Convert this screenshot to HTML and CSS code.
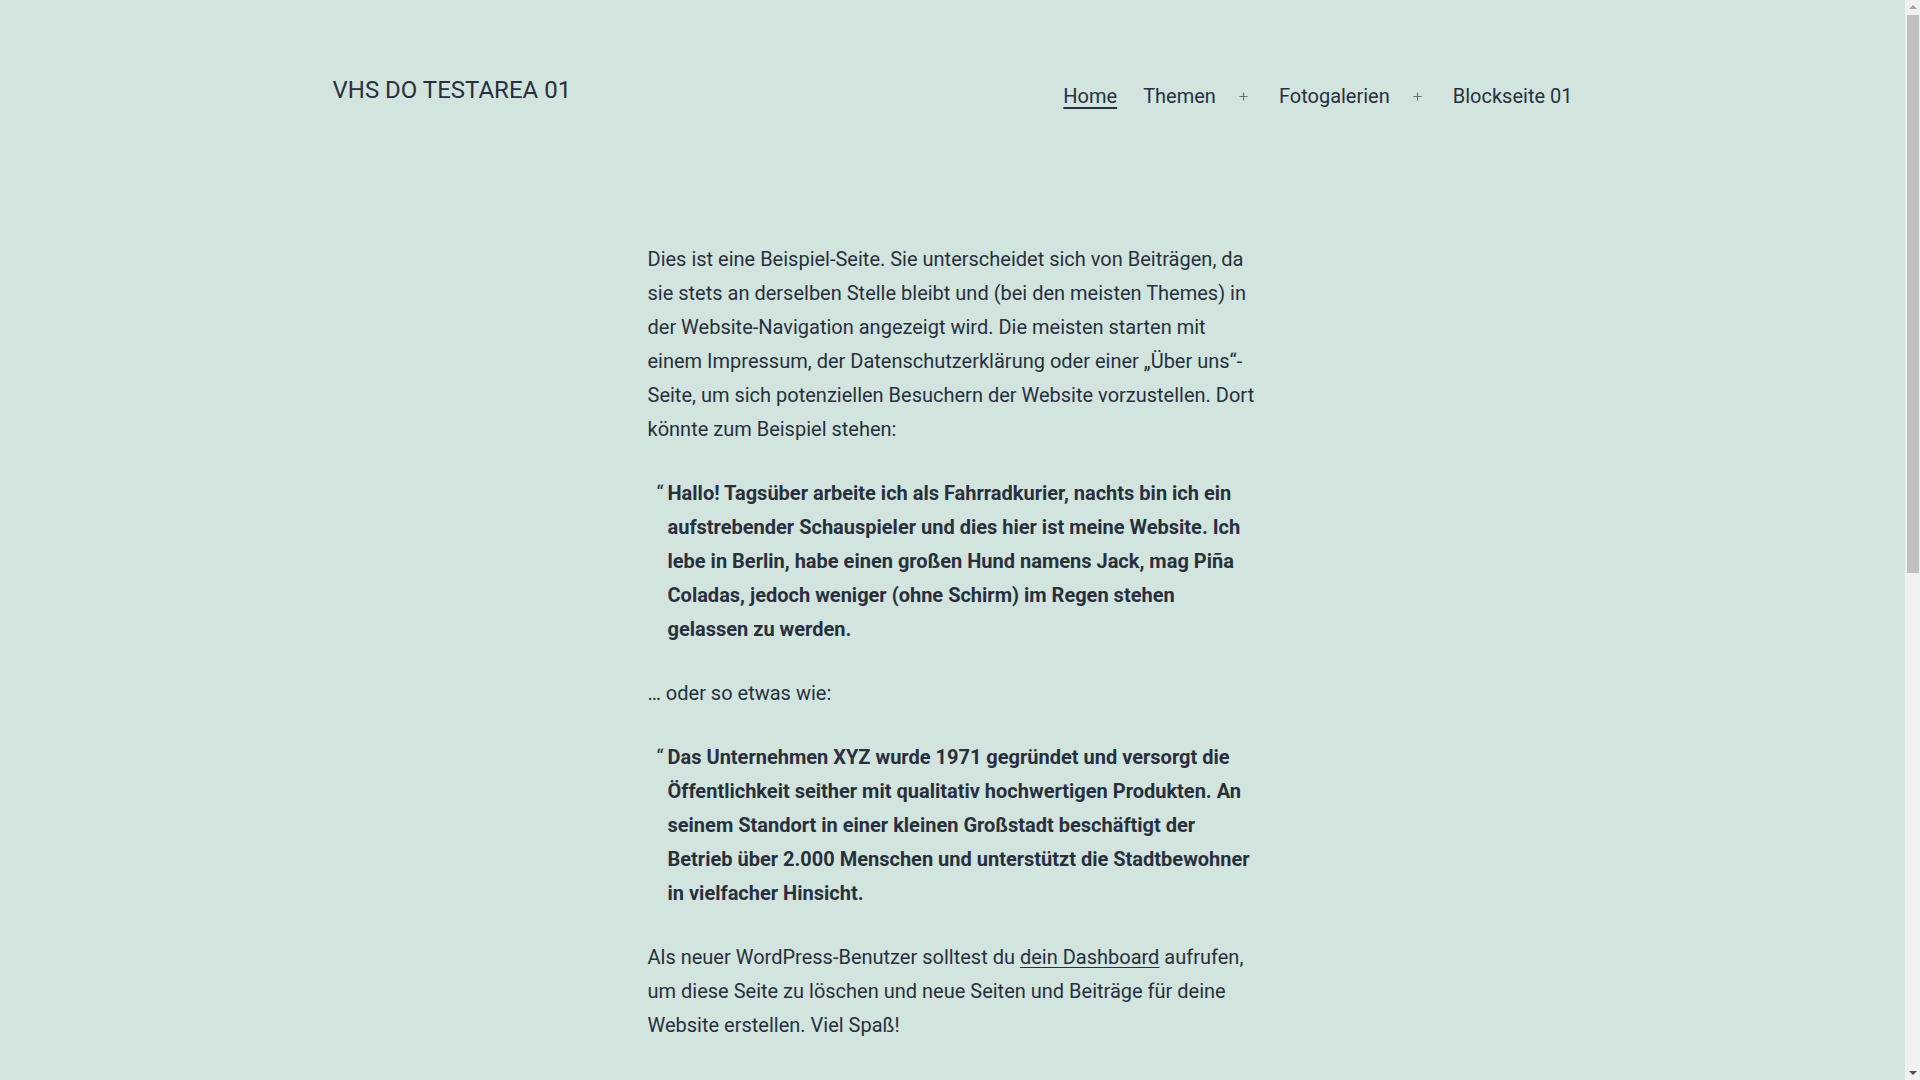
FILE: index.html
```html
<!DOCTYPE html>
<html lang="de">
<head>
<meta charset="utf-8">
<title>VHS DO TESTAREA 01</title>
<link rel="stylesheet" href="styles.css">
</head>
<body>
<header class="site-header">
  <p class="site-title">VHS DO TESTAREA 01</p>
  <nav class="primary-nav">
    <ul class="menu">
      <li class="menu-item current"><a href="#">Home</a></li>
      <li class="menu-item has-sub"><a href="#">Themen</a><button class="sub-toggle" aria-label="Untermenü öffnen"><svg viewBox="0 0 10 10" width="10" height="10"><path d="M5 0.5v9M0.5 5h9" stroke="currentColor" stroke-width="1.2" fill="none"/></svg></button></li>
      <li class="menu-item has-sub"><a href="#">Fotogalerien</a><button class="sub-toggle" aria-label="Untermenü öffnen"><svg viewBox="0 0 10 10" width="10" height="10"><path d="M5 0.5v9M0.5 5h9" stroke="currentColor" stroke-width="1.2" fill="none"/></svg></button></li>
      <li class="menu-item"><a href="#">Blockseite 01</a></li>
    </ul>
  </nav>
</header>
<main class="content">
  <p>Dies ist eine Beispiel-Seite. Sie unterscheidet sich von Beiträgen, da sie stets an derselben Stelle bleibt und (bei den meisten Themes) in der Website-Navigation angezeigt wird. Die meisten starten mit einem Impressum, der Datenschutzerklärung oder einer „Über uns“-Seite, um sich potenziellen Besuchern der Website vorzustellen. Dort könnte zum Beispiel stehen:</p>
  <blockquote class="quote"><p>Hallo! Tagsüber arbeite ich als Fahrradkurier, nachts bin ich ein aufstrebender Schauspieler und dies hier ist meine Website. Ich lebe in Berlin, habe einen großen Hund namens Jack, mag Piña Coladas, jedoch weniger (ohne Schirm) im Regen stehen gelassen zu werden.</p></blockquote>
  <p>… oder so etwas wie:</p>
  <blockquote class="quote"><p>Das Unternehmen XYZ wurde 1971 gegründet und versorgt die Öffentlichkeit seither mit qualitativ hochwertigen Produkten. An seinem Standort in einer kleinen Großstadt beschäftigt der Betrieb über 2.000 Menschen und unterstützt die Stadtbewohner in vielfacher Hinsicht.</p></blockquote>
  <p>Als neuer WordPress-Benutzer solltest du <a href="#">dein Dashboard</a> aufrufen, um diese Seite zu löschen und neue Seiten und Beiträge für deine Website erstellen. Viel Spaß!</p>
</main>
<div class="scrollbar" aria-hidden="true">
  <span class="sb-arrow sb-up"></span>
  <span class="sb-thumb"></span>
  <span class="sb-arrow sb-down"></span>
</div>
</body>
</html>
```
FILE: styles.css
```css
html, body {
  margin: 0;
  padding: 0;
}
body {
  background: #d1e4dd;
  color: #28303d;
  font-family: Roboto, "Liberation Sans", sans-serif;
  font-size: 20px;
  line-height: 1.7;
  padding-right: 15px;
}
a {
  color: #28303d;
}
.site-header {
  max-width: 1240px;
  margin: 0 auto;
  padding-top: 75px;
  display: flex;
  justify-content: space-between;
  align-items: flex-start;
}
.site-title {
  margin: 0;
  font-size: 24px;
  line-height: 1.3;
  font-weight: 400;
  text-transform: uppercase;
}
.primary-nav {
  margin-top: 8px;
  margin-right: -13px;
}
.menu {
  list-style: none;
  margin: 0;
  padding: 0;
  display: flex;
  align-items: center;
}
.menu-item {
  display: flex;
  align-items: center;
}
.menu-item a {
  display: block;
  padding: 0 13px;
  font-size: 20px;
  line-height: 1.3;
  text-decoration: none;
}
.menu-item.current a {
  text-decoration: underline;
  text-decoration-thickness: 2px;
  text-underline-offset: 4px;
}
.sub-toggle {
  display: flex;
  align-items: center;
  justify-content: center;
  width: 30px;
  height: 26px;
  margin-right: 7px;
  padding: 0;
  border: 0;
  background: transparent;
  color: #6a707a;
  cursor: pointer;
}
.sub-toggle svg {
  width: 9px;
  height: 9px;
  display: block;
}
.content {
  max-width: 610px;
  margin: 0 auto;
  padding-top: 133px;
  padding-bottom: 40px;
}
.content p {
  margin: 0 0 30px;
}
.content a {
  text-decoration: underline;
  text-decoration-thickness: 1px;
  text-underline-offset: 3px;
}
.quote {
  position: relative;
  margin: 0 0 30px;
  padding-left: 20px;
}
.quote p {
  font-weight: 700;
}
.quote::before {
  content: "\201C";
  position: absolute;
  left: 9px;
  top: 0;
  font-size: 20px;
  font-weight: 400;
}
.scrollbar {
  position: fixed;
  top: 0;
  right: 0;
  width: 15px;
  height: 100vh;
  background: #f1f1f1;
}
.sb-thumb {
  position: absolute;
  left: 2px;
  right: 1px;
  top: 15px;
  height: 558px;
  background: #c1c1c1;
}
.sb-arrow {
  position: absolute;
  left: 4px;
  width: 0;
  height: 0;
  border-left: 4px solid transparent;
  border-right: 4px solid transparent;
}
.sb-up {
  top: 5px;
  border-bottom: 4px solid #a3a3a3;
}
.sb-down {
  bottom: 5px;
  border-top: 4px solid #505050;
}
```
